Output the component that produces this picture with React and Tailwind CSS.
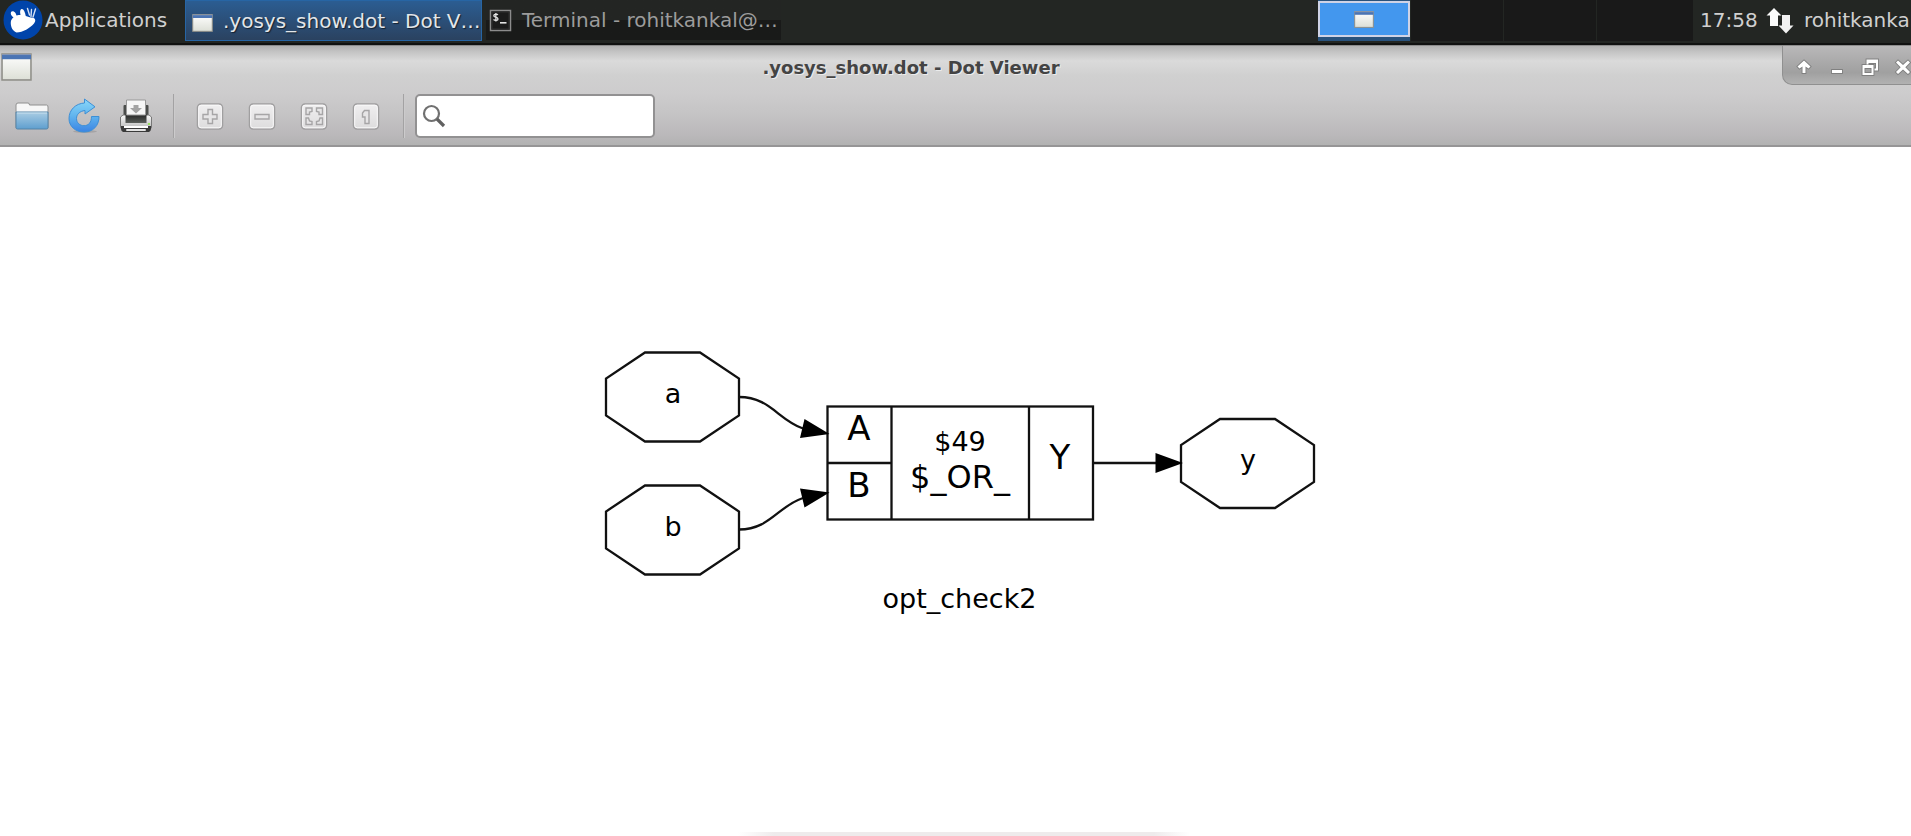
import React from "react";

function XubuntuLogo() {
  return (
    <svg width="40" height="40" viewBox="0 0 40 40" aria-hidden="true" className="shrink-0">
      <circle cx="20" cy="20" r="19.500" fill="#0044aa" />
      <path
        d="M8 12C9 11 11 11 12.500 13L13.500 15.500C15 15 16.500 15 17.500 15C16.800 12 17 9.500 18.500 9C20.500 8.500 22 12 22.800 16C25.500 17 28 17.500 30.500 18C32.500 18.800 33 21 31 23.500C27 28 20 32.500 13.500 32.500C9.500 31 7.500 26.500 7.800 22C8 20 9 18.500 10.500 17.500C8.500 16 7.200 14 8 12Z"
        fill="#fff"
      />
      <path d="M24.500 8.500L26.500 15M28.500 9.500L28 16.500M32.500 9L30 17" stroke="#d6e2f5" strokeWidth="1.400" strokeLinecap="round" fill="none" />
    </svg>
  );
}

function WindowIcon({ className }) {
  return (
    <svg viewBox="0 0 30 27" preserveAspectRatio="none" className={className} aria-hidden="true">
      <defs>
        <linearGradient id="winBody" x1="0" y1="0" x2="0" y2="1">
          <stop offset="0" stopColor="#ffffff" />
          <stop offset="1" stopColor="#dcdfd6" />
        </linearGradient>
      </defs>
      <rect x="1" y="1" width="28" height="25" fill="url(#winBody)" stroke="#8e8e88" strokeWidth="1.500" />
      <rect x="1" y="1.500" width="28" height="4.500" fill="#4a74b4" />
      <rect x="1" y="1" width="28" height="1" fill="#8898b4" />
    </svg>
  );
}

function TerminalIcon() {
  return (
    <svg width="23" height="23" viewBox="0 0 23 23" aria-hidden="true" className="shrink-0">
      <rect x="1.500" y="1.500" width="20" height="20" fill="#1b1b1b" stroke="#8c8c8c" strokeWidth="1.500" />
      <rect x="3" y="3" width="17" height="17" fill="none" stroke="#303030" />
      <path d="M9 5.800C7.800 4.800 4.800 5 4.800 6.700C4.800 8.500 9 7.900 9 9.900C9 11.600 5.900 11.700 4.500 10.600M6.900 4V12.500" fill="none" stroke="#e4e4e4" strokeWidth="1.300" />
      <path d="M11 13.800H17.500" stroke="#e4e4e4" strokeWidth="1.600" />
    </svg>
  );
}

function NetworkIcon() {
  return (
    <svg width="28" height="28" viewBox="0 0 28 28" aria-hidden="true">
      <path d="M8 1L15.500 8.500H12V19H4V8.500H0.500Z" fill="#fafafa" />
      <path d="M16 8H24V18.500H27.500L20 26.500L12.500 18.500H16Z" fill="#f2f2f2" />
    </svg>
  );
}

function FolderIcon() {
  return (
    <svg width="34" height="28" viewBox="0 0 34 28" aria-hidden="true">
      <defs>
        <linearGradient id="folder" x1="0" y1="0" x2="0" y2="1">
          <stop offset="0" stopColor="#a9cce3" />
          <stop offset="1" stopColor="#5f9fcf" />
        </linearGradient>
      </defs>
      <path d="M1 26V3Q1 1 3 1H13Q14.500 1 14.500 3H31.500Q33 3 33 5V26Z" fill="#f7f7f7" stroke="#909090" strokeWidth="1" />
      <path d="M1 10H33V25.500Q33 27 31.500 27H2.500Q1 27 1 25.500Z" fill="url(#folder)" stroke="#5484a8" strokeWidth="1" />
      <path d="M2 11H32" stroke="#c9e0ef" strokeWidth="1" />
    </svg>
  );
}

function RefreshIcon() {
  return (
    <svg width="32" height="36" viewBox="0 0 32 36" aria-hidden="true">
      <defs>
        <linearGradient id="refresh" x1="0" y1="0" x2="0" y2="1">
          <stop offset="0" stopColor="#8ad8fa" />
          <stop offset="0.500" stopColor="#62b5ee" />
          <stop offset="1" stopColor="#3a84e4" />
        </linearGradient>
      </defs>
      <ellipse cx="17" cy="33.500" rx="12" ry="1.500" fill="#000" opacity="0.120" />
      <path
        d="M16.500 1L27 8.800L17 16V12.500C11.500 13.200 8.500 16.500 8.500 20.500C8.500 25 12 27.700 16 27.700C20.500 27.700 23.500 24.500 23.500 18.500H31C31 28 25 34 16 34C7.500 34 1 28.500 1 20.500C1 12 7.500 5.500 16.500 5Z"
        fill="url(#refresh)"
        stroke="#3d8fd6"
        strokeWidth="1"
        strokeLinejoin="round"
      />
    </svg>
  );
}

function PrinterIcon() {
  return (
    <svg width="34" height="34" viewBox="0 0 34 34" aria-hidden="true">
      <defs>
        <linearGradient id="printBody" x1="0" y1="0" x2="0" y2="1">
          <stop offset="0" stopColor="#fafafa" />
          <stop offset="1" stopColor="#b8b8b8" />
        </linearGradient>
        <linearGradient id="printDark" x1="0" y1="0" x2="0" y2="1">
          <stop offset="0" stopColor="#222" />
          <stop offset="1" stopColor="#5a5e5a" />
        </linearGradient>
      </defs>
      <rect x="4.500" y="6" width="25" height="14" rx="1" fill="#4b4d4b" />
      <path d="M4 16L1.500 18V28Q1.500 30 3.500 30H30.500Q32.500 30 32.500 28V18L30 16Z" fill="url(#printBody)" stroke="#777" strokeWidth="1" />
      <rect x="6.500" y="15" width="21" height="9" fill="url(#printDark)" />
      <path d="M7.500 1H26.500V16H7.500Z" fill="#f6f6f6" stroke="#999" strokeWidth="1" />
      <path d="M14.500 6H19.500V9H23L17 14.500L11 9H14.500Z" fill="#a3a3a3" />
      <path d="M2 27H32V30Q32 32 30 33H4Q2 32 2 30Z" fill="#3a3a3a" />
      <rect x="5" y="27" width="24" height="2" fill="#fff" />
      <rect x="7" y="30" width="20" height="2" rx="1" fill="#e2e2e2" />
      <circle cx="30" cy="25" r="1.100" fill="#8fe84a" />
    </svg>
  );
}

function KeyIcon({ children }) {
  return (
    <svg width="28" height="28" viewBox="0 0 28 28" aria-hidden="true">
      <defs>
        <linearGradient id="keyFace" x1="0" y1="0" x2="0" y2="1">
          <stop offset="0" stopColor="#f0eff0" />
          <stop offset="1" stopColor="#dddcdd" />
        </linearGradient>
      </defs>
      <rect x="1.500" y="2" width="25" height="25" rx="3.500" fill="url(#keyFace)" stroke="#a09fa0" strokeWidth="1.500" />
      <rect x="2.700" y="3.200" width="22.600" height="22.600" rx="2.500" fill="none" stroke="#faf9fa" strokeWidth="1" />
      <g fill="#e6e5e6" stroke="#a6a5a6" strokeWidth="1.400">
        {children}
      </g>
    </svg>
  );
}

const tools = [
  { label: "Open", icon: <FolderIcon /> },
  { label: "Reload", icon: <RefreshIcon /> },
  { label: "Print", icon: <PrinterIcon /> },
];

const zoomTools = [
  {
    label: "Zoom in",
    icon: (
      <KeyIcon>
        <path d="M12 7.500H16.500V12.500H21V17H16.500V21.500H12V17H7V12.500H12Z" />
      </KeyIcon>
    ),
  },
  {
    label: "Zoom out",
    icon: (
      <KeyIcon>
        <path d="M7 12.500H21V17H7Z" />
      </KeyIcon>
    ),
  },
  {
    label: "Zoom to fit",
    icon: (
      <KeyIcon>
        <path d="M6 6H12V9.500L9.500 10V12.500H6ZM16.500 6H22.500V12.500H19V10L16.500 9.500ZM6 16H8.500L9.500 19L12 19.500V22.500H6ZM22.500 16H20L19 19L16.500 19.500V22.500H22.500Z" />
      </KeyIcon>
    ),
  },
  {
    label: "Zoom to 100%",
    icon: (
      <KeyIcon>
        <path d="M12.500 8.500H17V21.500H13V15H10.500V11Z" />
      </KeyIcon>
    ),
  },
];

const windowControls = [
  {
    label: "Roll up",
    icon: <path d="M10 3.500L16.500 9.500L14.500 11.500L11.500 9.500V16H8.500V9.500L5.500 11.500L3.500 9.500Z" />,
  },
  { label: "Minimize", icon: <path d="M5 13H15V16H5Z" /> },
  {
    label: "Restore",
    icon: (
      <path
        fillRule="evenodd"
        d="M6.500 2.500H18V13.500H14.500V11.500H16V6H8.500V7.500H6.500ZM2.500 8H13.500V18H2.500ZM4.500 11V16H11.500V11Z"
      />
    ),
  },
  {
    label: "Close",
    icon: <path d="M5 3.500L10 8L15 3.500L17 5.500L12.300 10.300L17 15L15 17L10 12.500L5 17L3 15L7.700 10.300L3 5.500Z" />,
  },
];

function Panel() {
  return (
    <header className="flex h-[45px] items-start overflow-hidden border-b-2 border-[#101110] bg-[#232623] text-[20px] leading-6 text-[#d0d0d0]">
      <button type="button" className="flex h-10 w-[185px] shrink-0 items-center gap-[2px] pl-[3px] whitespace-nowrap">
        <XubuntuLogo />
        Applications
      </button>
      <button
        type="button"
        className="flex h-[41px] w-[297px] shrink-0 items-center gap-2.5 border border-[#2765a4] bg-gradient-to-b from-[#2b5d92] to-[#2a4260] pl-[6px] text-[#e2e6ea] whitespace-nowrap [text-shadow:1px_1px_1px_#14202e]"
      >
        <WindowIcon className="mt-1 h-[18px] w-[21px] shrink-0" />
        .yosys_show.dot - Dot V…
      </button>
      <button
        type="button"
        className="ml-1 flex h-10 w-[295px] shrink-0 items-center gap-2.5 bg-gradient-to-b from-[#232523] from-50% to-[#191a19] to-50% pl-[3px] text-[#9c9c9c] whitespace-nowrap"
      >
        <TerminalIcon />
        Terminal - rohitkankal@…
      </button>
      <nav aria-label="Workspaces" className="ml-auto flex h-[41px] shrink-0 gap-px">
        <button type="button" aria-label="Workspace 1" className="w-[92px] bg-[#29527c] pt-px pb-1">
          <span className="flex h-9 items-center justify-center border-2 border-[#cfd3e6] bg-[#4397ee]">
            <WindowIcon className="h-[17px] w-5" />
          </span>
        </button>
        <button type="button" aria-label="Workspace 2" className="w-[92px] bg-[#191919]" />
        <button type="button" aria-label="Workspace 3" className="w-[92px] bg-[#191919]" />
        <button type="button" aria-label="Workspace 4" className="w-24 bg-[#191919]" />
      </nav>
      <div className="flex h-[39px] w-[218px] shrink-0 items-center pl-[7px] whitespace-nowrap">
        <time className="w-[56px] shrink-0">17:58</time>
        <button type="button" aria-label="Network" className="flex w-12 shrink-0 items-center justify-center pt-[3px]">
          <NetworkIcon />
        </button>
        <span className="min-w-0 overflow-hidden">rohitkankal</span>
      </div>
    </header>
  );
}

function TitleBar() {
  return (
    <div className="flex h-[45px] items-start justify-between">
      <div className="w-[129px] pt-[7px] pl-[1px]">
        <WindowIcon className="h-[28px] w-[31px]" />
      </div>
      <h1 className="pt-[10px] pr-[89px] text-[18px] leading-6 font-bold text-[#444] [text-shadow:1px_1px_0_#ececec]">
        .yosys_show.dot - Dot Viewer
      </h1>
      <div className="flex h-[39px] w-[129px] overflow-hidden rounded-bl-[10px] border-b border-l border-[#909090] bg-gradient-to-b from-[#b9b8b9] via-[#a0a0a0] via-70% to-[#b2b2b2] pl-[4px]">
        {windowControls.map((control) => (
          <button key={control.label} type="button" aria-label={control.label} className="flex w-[33px] shrink-0 items-center justify-center pt-[3px]">
            <svg width="20" height="20" viewBox="0 0 20 20" fill="#fff" stroke="#808080" strokeWidth="1.800" className="overflow-visible [paint-order:stroke]">
              {control.icon}
            </svg>
          </button>
        ))}
      </div>
    </div>
  );
}

function ToolButton({ label, icon }) {
  return (
    <button type="button" aria-label={label} className="flex h-11 w-[52px] items-center justify-center">
      {icon}
    </button>
  );
}

function Divider({ className }) {
  return <span className={`h-11 w-px bg-[#a3a2a3] shadow-[1px_0_0_#cccbcc] ${className}`} />;
}

function Toolbar() {
  return (
    <div role="toolbar" className="flex h-[54px] items-center pb-1 pl-[6px]">
      {tools.map((tool) => (
        <ToolButton key={tool.label} {...tool} />
      ))}
      <Divider className="mr-[10px] ml-[11px]" />
      {zoomTools.map((tool) => (
        <ToolButton key={tool.label} {...tool} />
      ))}
      <Divider className="mr-[11px] ml-[11px]" />
      <label className="flex h-11 w-60 items-center gap-2 rounded-[5px] border-2 border-[#929192] bg-white px-[5px]">
        <svg width="24" height="24" viewBox="0 0 24 24" fill="none" aria-hidden="true" className="shrink-0">
          <circle cx="9.500" cy="9.500" r="7.500" stroke="#707070" strokeWidth="2.200" />
          <path d="M15 15L22 22" stroke="#606060" strokeWidth="3.200" />
        </svg>
        <input type="search" aria-label="Find" className="w-full min-w-0 bg-transparent text-[18px] text-[#333] outline-none" />
      </label>
    </div>
  );
}

const OCTAGON = "39,0 94,0 133,26 133,63 94,89 39,89 0,63 0,26";

function Signal({ x, y, name }) {
  return (
    <g transform={`translate(${x} ${y})`}>
      <polygon points={OCTAGON} fill="#fff" stroke="#111" strokeWidth="2.300" />
      <text x="67" y="50" fontSize="27">
        {name}
      </text>
    </g>
  );
}

function Netlist() {
  return (
    <svg
      width="731"
      height="299"
      viewBox="590 340 731 299"
      role="img"
      aria-label="opt_check2 netlist"
      fill="#000"
      textAnchor="middle"
      className="font-['DejaVu_Sans',sans-serif]"
    >
      <Signal x={606} y={352.5} name="a" />
      <Signal x={606} y={485.5} name="b" />
      <Signal x={1181} y={419} name="y" />
      <g fill="none" stroke="#111" strokeWidth="2.300">
        <rect x="827.500" y="406.500" width="265.500" height="113" />
        <path d="M891.500 406.500V519.500M1029 406.500V519.500M827.500 463H891.500" />
        <path d="M739 397C770 397 778 420 803 428.500" />
        <path d="M739 529.500C770 529.500 778 506 803 498" />
        <path d="M1093 463H1157" />
      </g>
      <path d="M804.500 419L829.500 434L800 438ZM800 488.500L829.500 492.500L804.500 507.500ZM1155.500 453L1183 463L1155.500 473Z" />
      <text x="859" y="440" fontSize="34">A</text>
      <text x="859" y="497" fontSize="34">B</text>
      <text x="1060" y="468.500" fontSize="34">Y</text>
      <text x="960" y="451" fontSize="27">$49</text>
      <text x="960" y="488" fontSize="32">$_OR_</text>
      <text x="959.500" y="608" fontSize="27">opt_check2</text>
    </svg>
  );
}

export default function App() {
  return (
    <div className="flex min-h-screen flex-col bg-white font-['DejaVu_Sans',sans-serif]">
      <Panel />
      <section className="border-t border-b-2 border-t-[#8c8c8c] border-b-[#969596] bg-[linear-gradient(#b2b2b2,#c4c4c4_6%,#dadada_15%,#d0d0d0_30%,#cdcccd_48%,#c5c4c5_68%,#bab8ba_90%,#b2b2b2)]">
        <TitleBar />
        <Toolbar />
      </section>
      <main className="flex grow flex-col items-center">
        <div className="flex grow items-center">
          <Netlist />
        </div>
        <div className="ml-4 h-1 w-[452px] bg-[linear-gradient(90deg,#fff,#eeebec_8%,#eeebec_92%,#fff)]" />
      </main>
    </div>
  );
}
